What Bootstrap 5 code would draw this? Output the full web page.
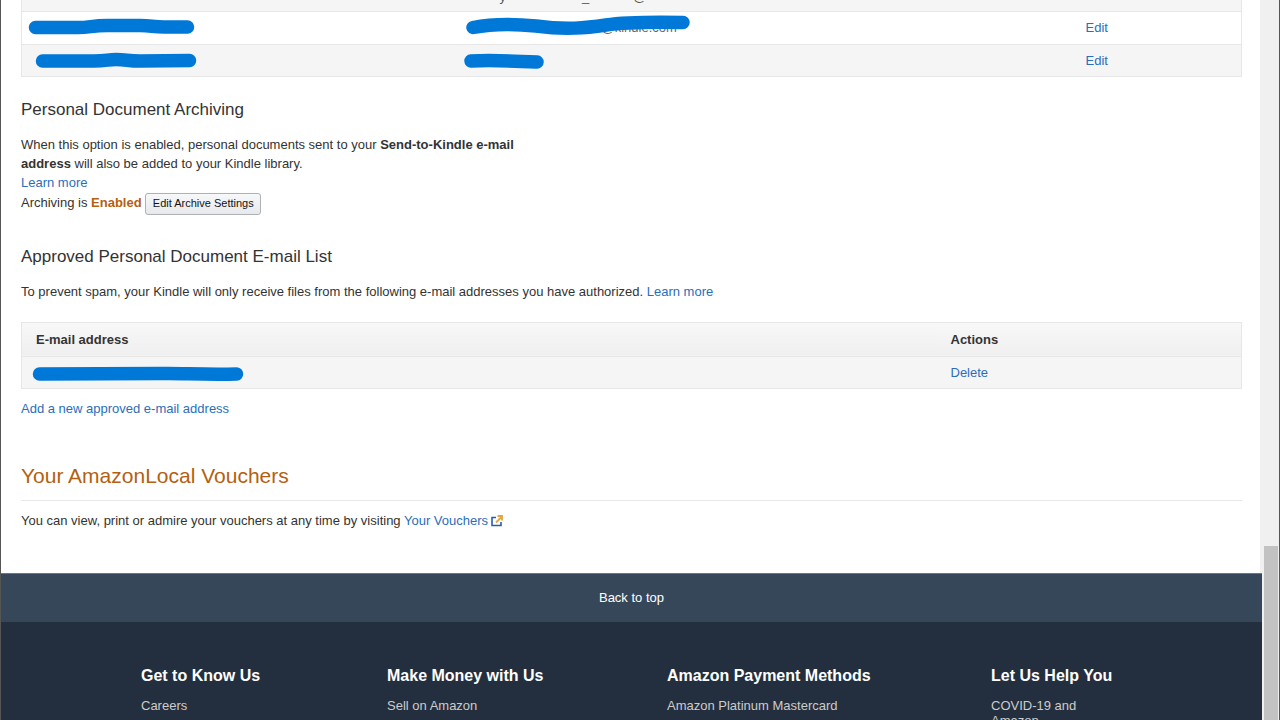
<!DOCTYPE html>
<html lang="en">
<head>
    <meta charset="UTF-8">
    <title>Manage Your Content and Devices</title>
    <meta name="viewport" content="width=device-width, initial-scale=1">
    <link href="https://cdn.jsdelivr.net/npm/bootstrap@5.3.3/dist/css/bootstrap.min.css" rel="stylesheet">
    <style>
        html, body { height: 720px; overflow: hidden; }
        body { font-family: "Liberation Sans", Arial, sans-serif; font-size: 13px; line-height: 19px; color: #333; background: #fff; }
        a { color: #2a6ebb; text-decoration: none; }
        .app-frame { height: 720px; border-left: 1px solid #555; border-right: 1px solid #555; }
        .app-page { min-width: 0; overflow: hidden; }
        .app-main { padding: 0 18px 0 20px; height: 573px; border-right: 2px solid #f0f0f0; }

        .amz-table { width: 100%; border-collapse: collapse; border: 1px solid #e7e7e7; border-top: 0; table-layout: fixed; }
        .amz-table td, .amz-table th { padding: 0 0 0 14px; border-top: 1px solid #e7e7e7; vertical-align: middle; position: relative; }
        .amz-table tr.row-odd td { background: #f5f5f5; }
        .amz-cut td { height: 11px; vertical-align: top; background: #f5f5f5; border-top: 0 !important; }
        .amz-row td { height: 33px; }
        .amz-row.row-low td { height: 32px; }
        .amz-table th { height: 34px; font-weight: 700; background: linear-gradient(#f8f8f8, #efefef); color: #333; border-top-color: #e4e4e4; }
        .amz-table-mail { margin-top: 21px; border-top: 1px solid #e7e7e7; }
        .amz-table-mail th { border-top: 0; }
        .cut-text { display: block; margin-top: -13px; color: #555; }
        .cut-y { margin-left: 20px; }
        .cut-line { margin-left: 76px; }
        .cut-at { margin-left: 44px; }
        .mail-tail { display: block; margin-left: 122px; color: #666; }

        .redact { position: absolute; left: 0; top: 0; display: block; overflow: visible; pointer-events: none; }
        .redact path { fill: none; stroke: #0078d7; stroke-width: 13.5; stroke-linecap: round; stroke-linejoin: round; }

        .sec-title { font-size: 17px; font-weight: 400; line-height: 22px; color: #333; margin: 0; }
        .sec-one { margin-top: 22px; }
        .sec-two { margin-top: 32px; }
        .sec-copy { width: 510px; margin: 14px 0 0; height: 79px; }
        .sec-note { margin: 14px 0 0; }
        .word-on { color: #b45f12; font-weight: 700; }
        .btn-archive { font-size: 11px; line-height: 15px; color: #111; height: 22px; width: 116px; padding: 0; margin-top: 1px; border: 1px solid #adb1b8; border-radius: 3px; background: linear-gradient(#f7f8fa, #e7e9ec); vertical-align: middle; }
        .add-link { margin-top: 10px; }
        .voucher-title { font-size: 21px; font-weight: 400; line-height: 26px; color: #b45f12; margin: 45px 0 0; padding-bottom: 11px; border-bottom: 1px solid #e7e7e7; }
        .voucher-copy { margin: 10px 0 0; }
        .ext-icon { margin-left: -1px; vertical-align: -2px; }

        .back-top { height: 49px; background: #37475a; border-top: 1px solid #6b7786; color: #fff; line-height: 48px; text-align: center; }
        .back-top a { color: #fff; }
        .foot-wrap { height: 98px; background: #232f3e; padding: 42px 0 0 140px; overflow: hidden; }
        .foot-col { flex: none; }
        .foot-col h6 { font-size: 16px; font-weight: 700; line-height: 24px; color: #fff; margin: 0 0 10px; }
        .foot-col a { display: block; color: #ccc; line-height: 15px; }
        .foot-a { width: 246px; }
        .foot-b { width: 280px; }
        .foot-c { width: 324px; }
        .foot-d { width: 130px; }

        .app-scroll { width: 17px; flex: none; background: #f0f0f0; padding: 546px 1px 0 2px; }
        .app-thumb { height: 100%; background: #c2c2c2; }
    </style>
</head>
<body>
    <div class="app-frame d-flex">
        <div class="app-page flex-grow-1">
            <div class="app-main">
                <table class="amz-table">
                    <colgroup><col style="width:444px"><col style="width:606px"><col></colgroup>
                    <tr class="amz-cut"><td></td><td><span class="cut-text"><span class="cut-y">y</span><span class="cut-line">_</span><span class="cut-at">@</span></span></td><td></td></tr>
                    <tr class="amz-row">
                        <td>
                            <svg class="redact" width="180" height="30"><path d="M13.5 15.5 L56 15.5 C68 15.5 70 13.5 85 13.5 L118 13.5 C130 13.5 130 15 142 15 L165.5 15"/></svg>
                        </td>
                        <td>
                            <span class="mail-tail">@kindle.com</span>
                            <svg class="redact" width="226" height="30"><path d="M7 15.5 C30 11 50 12 70 14 C100 18 120 16 140 13 C160 10 190 10 217 10.5"/></svg>
                        </td>
                        <td><a href="#">Edit</a></td>
                    </tr>
                    <tr class="amz-row row-low row-odd">
                        <td>
                            <svg class="redact" width="180" height="30"><path d="M20.5 16 L72 16 C84 16 86 14.5 94 14.5 C104 14.5 106 16 118 16 L167.5 15.5"/></svg>
                        </td>
                        <td>
                            <svg class="redact" width="82" height="30"><path d="M5 16 C25 15 50 16 71 17"/></svg>
                        </td>
                        <td><a href="#">Edit</a></td>
                    </tr>
                </table>

                <h5 class="sec-title sec-one">Personal Document Archiving</h5>
                <div class="sec-copy">
                    When this option is enabled, personal documents sent to your <b>Send-to-Kindle e-mail address</b> will also be added to your Kindle library.<br>
                    <a href="#">Learn more</a><br>
                    Archiving is <span class="word-on">Enabled</span>
                    <button type="button" class="btn-archive">Edit Archive Settings</button>
                </div>

                <h5 class="sec-title sec-two">Approved Personal Document E-mail List</h5>
                <p class="sec-note">To prevent spam, your Kindle will only receive files from the following e-mail addresses you have authorized. <a href="#">Learn more</a></p>

                <table class="amz-table amz-table-mail">
                    <colgroup><col style="width:915px"><col></colgroup>
                    <tr><th>E-mail address</th><th>Actions</th></tr>
                    <tr class="amz-row row-low row-odd">
                        <td>
                            <svg class="redact" width="222" height="30"><path d="M17.5 17 L140 16.5 C160 16 180 18 214.5 17"/></svg>
                        </td>
                        <td><a href="#">Delete</a></td>
                    </tr>
                </table>
                <div class="add-link"><a href="#">Add a new approved e-mail address</a></div>

                <h4 class="voucher-title">Your AmazonLocal Vouchers</h4>
                <p class="voucher-copy">You can view, print or admire your vouchers at any time by visiting <a href="#">Your Vouchers</a>
                    <svg class="ext-icon" width="12" height="12" viewBox="0 0 12 12"><path d="M5 2.5H1v8h9V7" fill="none" stroke="#2a5db0" stroke-width="1.6"/><path d="M5 7.5 10 2.5M6.5 1h4.5v4.5" fill="none" stroke="#e8a33d" stroke-width="1.8"/></svg>
                </p>
            </div>

            <div class="back-top"><a href="#">Back to top</a></div>
            <div class="foot-wrap d-flex">
                <div class="foot-col foot-a"><h6>Get to Know Us</h6><a href="#">Careers</a></div>
                <div class="foot-col foot-b"><h6>Make Money with Us</h6><a href="#">Sell on Amazon</a></div>
                <div class="foot-col foot-c"><h6>Amazon Payment Methods</h6><a href="#">Amazon Platinum Mastercard</a></div>
                <div class="foot-col foot-d"><h6>Let Us Help You</h6><a href="#">COVID-19 and Amazon</a></div>
            </div>
        </div>
        <div class="app-scroll"><div class="app-thumb"></div></div>
    </div>
    <script src="https://cdn.jsdelivr.net/npm/bootstrap@5.3.3/dist/js/bootstrap.bundle.min.js"></script>
</body>
</html>
